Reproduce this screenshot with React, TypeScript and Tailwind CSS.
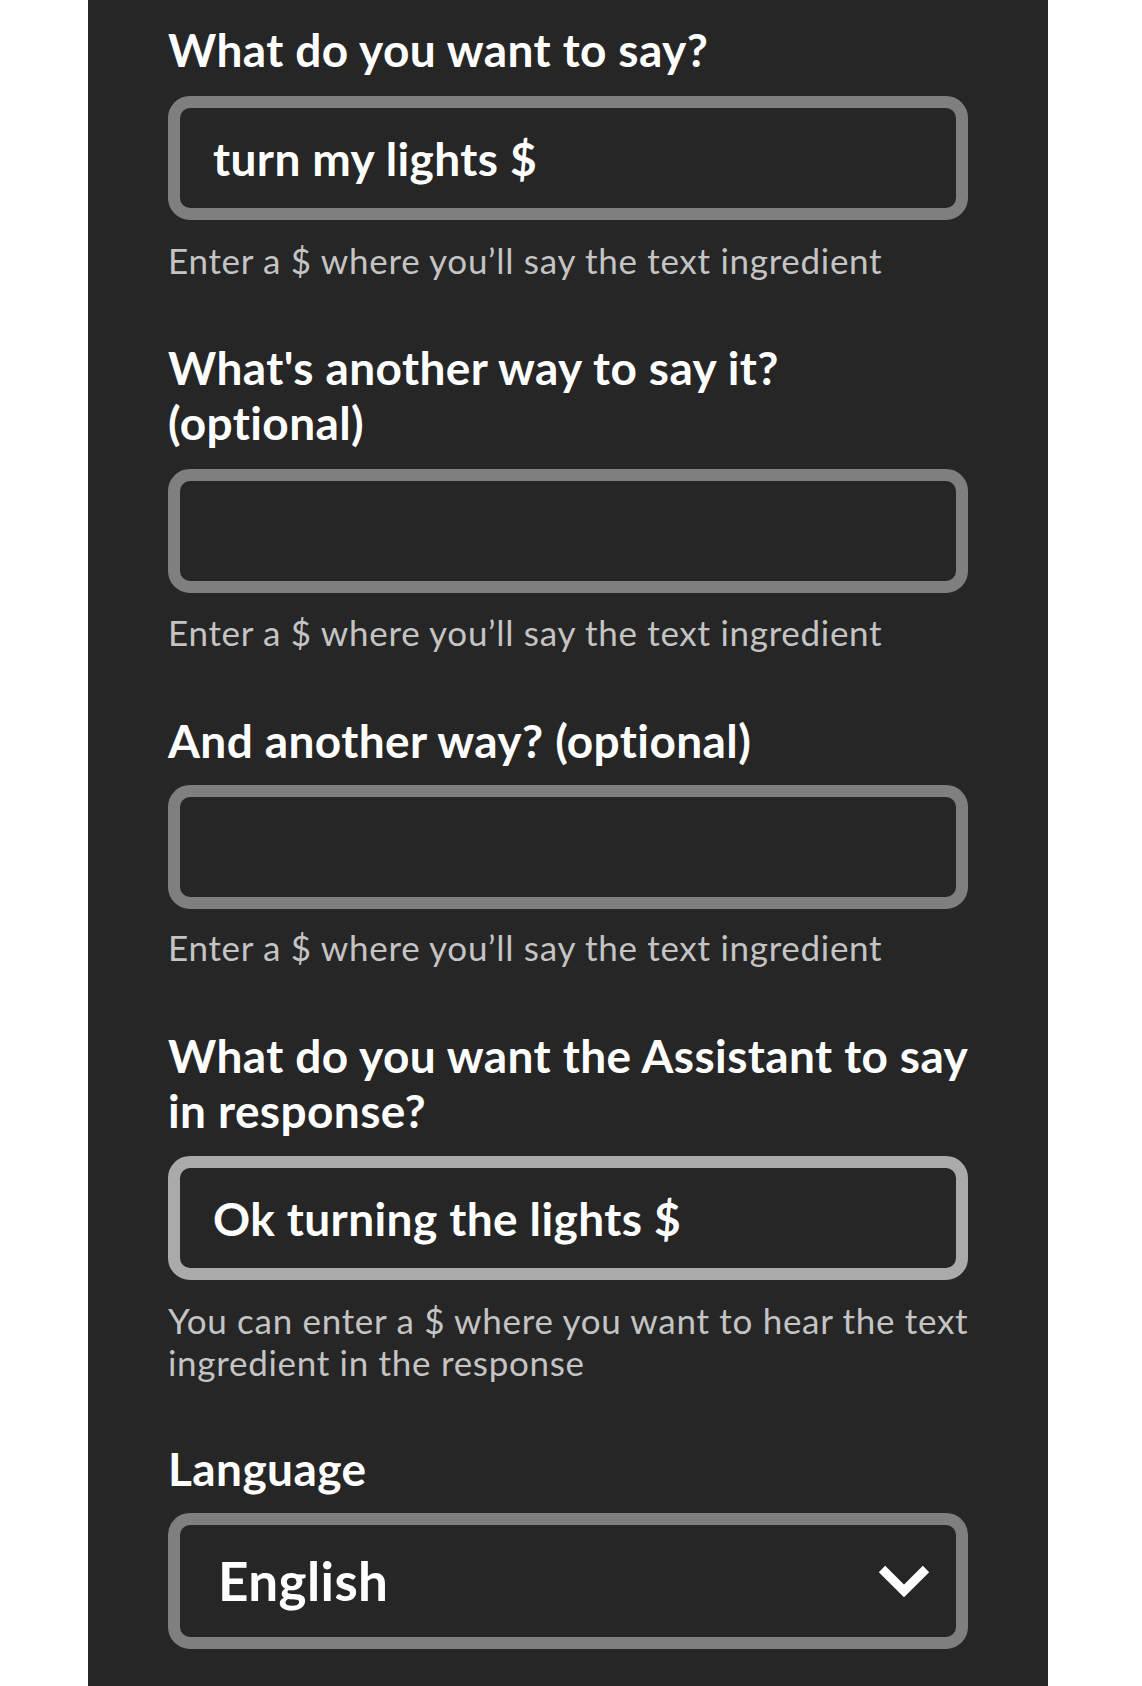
import React from "react";

const font = { fontFamily: '"Lato", "Noto Sans", sans-serif' };

function Heading({ children, className = "" }: { children: React.ReactNode; className?: string }) {
  return (
    <h2 className={`whitespace-nowrap text-[46px] leading-[55px] font-bold tracking-[0.4px] text-white ${className}`}>{children}</h2>
  );
}

function Box({ value, light = false, className = "" }: { value?: string; light?: boolean; className?: string }) {
  return (
    <div
      className={`flex h-[124px] w-[800px] items-center rounded-[22px] border-[12px] bg-[#262626] pl-[33px] ${
        light ? "border-[#aaaaaa]" : "border-[#7f7f7f]"
      } ${className}`}
    >
      <span className="text-[46px] font-bold tracking-[0.4px] text-white">{value}</span>
    </div>
  );
}

function Helper({ children, className = "" }: { children: React.ReactNode; className?: string }) {
  return <p className={`whitespace-nowrap text-[35px] leading-[42px] tracking-[0.7px] text-[#c4c4c4] ${className}`}>{children}</p>;
}

export default function App() {
  return (
    <div className="min-h-screen bg-white" style={font}>
      <div className="ml-[88px] min-h-[1686px] w-[960px] bg-[#262626] px-20 pt-[22px] pb-[36px]">
        <Heading>What do you want to say?</Heading>
        <Box value="turn my lights $" className="mt-[19px]" />
        <Helper className="mt-[19px]">Enter a $ where you’ll say the text ingredient</Helper>

        <Heading className="mt-[59px]">
          What's another way to say it?
          <br />
          (optional)
        </Heading>
        <Box className="mt-[19px]" />
        <Helper className="mt-[18px]">Enter a $ where you’ll say the text ingredient</Helper>

        <Heading className="mt-[60px]">And another way? (optional)</Heading>
        <Box className="mt-[17px]" />
        <Helper className="mt-[17px]">Enter a $ where you’ll say the text ingredient</Helper>

        <Heading className="mt-[60px]">
          What do you want the Assistant to say
          <br />
          in response?
        </Heading>
        <Box value="Ok turning the lights $" light className="mt-[18px]" />
        <Helper className="mt-[19px]">
          You can enter a $ where you want to hear the text
          <br />
          ingredient in the response
        </Helper>

        <Heading className="mt-[58px]">Language</Heading>
        <div className="mt-[17px] flex h-[136px] w-[800px] items-center justify-between rounded-[22px] border-[12px] border-[#7f7f7f] bg-[#262626] pl-[38px] pr-[26px]">
          <span className="text-[53px] font-bold tracking-[0.4px] text-white">English</span>
          <svg width="52" height="36" viewBox="0 0 52 36">
            <path d="M4 6 L26 28 L48 6" fill="none" stroke="#ffffff" strokeWidth="9" />
          </svg>
        </div>
      </div>
    </div>
  );
}
